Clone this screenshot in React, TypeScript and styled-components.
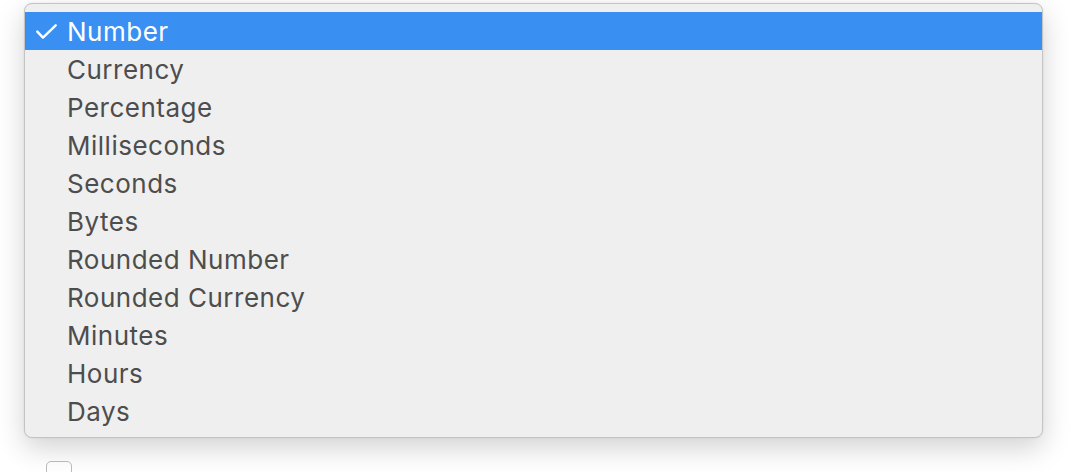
import styled, { createGlobalStyle } from "styled-components";

const GlobalStyle = createGlobalStyle`
  html, body {
    margin: 0;
    padding: 0;
    background: #ffffff;
    font-family: Inter, "Noto Sans", sans-serif;
  }
`;

const options = [
  "Number",
  "Currency",
  "Percentage",
  "Milliseconds",
  "Seconds",
  "Bytes",
  "Rounded Number",
  "Rounded Currency",
  "Minutes",
  "Hours",
  "Days",
];

export default function App() {
  return (
    <>
      <GlobalStyle />
      <Page>
        <Form>
          <PopupButton />
          <Field $top={39} />
          <Field $top={113} />
          <Checkbox />
        </Form>

        <Menu>
          {options.map((label, i) => (
            <Item key={label} $selected={i === 0}>
              <Check>
                {i === 0 && (
                  <svg width="21" height="15" viewBox="0 0 21 15">
                    <path
                      d="M1.3 7.6 L7 13.6 L19.7 1.3"
                      fill="none"
                      stroke="currentColor"
                      strokeWidth="2.4"
                      strokeLinecap="round"
                      strokeLinejoin="round"
                    />
                  </svg>
                )}
              </Check>
              {label}
            </Item>
          ))}
        </Menu>
      </Page>
    </>
  );
}

// STYLES

const Page = styled.div`
  position: relative;
  width: 1076px;
  height: 472px;
  overflow: hidden;
`;

const Form = styled.div`
  display: flex;
  flex-direction: column;
  padding: 12px 33px 0 24px;
`;

const PopupButton = styled.div`
  height: 56px;
  border-radius: 6px;
  background: #3a8ff3;
`;

const Field = styled.div<{ $top: number }>`
  margin-top: ${(p) => p.$top}px;
  height: 55px;
  border: 1px solid #9a9a9a;
  border-radius: 5px;
`;

const Checkbox = styled.div`
  margin: 127px 0 0 22px;
  width: 24px;
  height: 24px;
  border: 1px solid #bdbdbd;
  border-radius: 5px;
  background: #fff;
`;

const Menu = styled.div`
  position: absolute;
  left: 24px;
  top: 3px;
  width: 1017px;
  padding: 8px 0 7px;
  background: #efefef;
  border: 1px solid #c4c4c4;
  border-radius: 8px;
  box-shadow: 0 10px 28px rgba(0, 0, 0, 0.18), 0 0 2px rgba(0, 0, 0, 0.08);
`;

const Item = styled.div<{ $selected: boolean }>`
  display: flex;
  align-items: center;
  height: 38px;
  font-size: 26px;
  letter-spacing: 0.5px;
  color: ${(p) => (p.$selected ? "#ffffff" : "#4d4d4d")};
  background: ${(p) => (p.$selected ? "#3a8ff3" : "transparent")};
`;

const Check = styled.span`
  display: flex;
  align-items: center;
  justify-content: center;
  width: 42px;
  svg {
    display: block;
  }
`;
